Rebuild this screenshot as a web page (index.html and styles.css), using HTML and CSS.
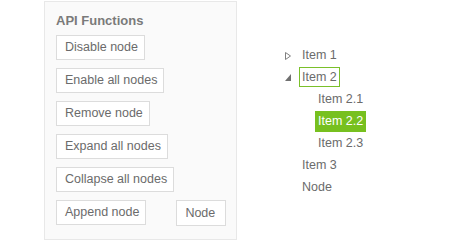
FILE: index.html
```html
<!DOCTYPE html>
<html>
<head>
<meta charset="utf-8">
<link rel="stylesheet" href="styles.css">
</head>
<body>
<div class="page">
  <div class="panel">
    <h4 class="title">API Functions</h4>
    <div class="btn-row"><button class="btn">Disable node</button></div>
    <div class="btn-row"><button class="btn">Enable all nodes</button></div>
    <div class="btn-row"><button class="btn">Remove node</button></div>
    <div class="btn-row"><button class="btn">Expand all nodes</button></div>
    <div class="btn-row"><button class="btn">Collapse all nodes</button></div>
    <div class="btn-row last"><button class="btn">Append node</button><span class="input">Node</span></div>
  </div>
  <ul class="tree">
    <li>
      <div class="row">
        <span class="icon"><svg width="15" height="22" viewBox="0 0 15 22"><polygon points="1.5,8.5 6.5,12 1.5,15.5" fill="none" stroke="#808080" stroke-width="1"/></svg></span>
        <span class="k-in">Item 1</span>
      </div>
    </li>
    <li>
      <div class="row">
        <span class="icon"><svg width="15" height="22" viewBox="0 0 15 22"><polygon points="7,8 7,15 1,15" fill="#707070"/></svg></span>
        <span class="k-in focused">Item 2</span>
      </div>
      <ul class="sub">
        <li><div class="row"><span class="icon"></span><span class="k-in">Item 2.1</span></div></li>
        <li><div class="row"><span class="icon"></span><span class="k-in selected">Item 2.2</span></div></li>
        <li><div class="row"><span class="icon"></span><span class="k-in">Item 2.3</span></div></li>
      </ul>
    </li>
    <li><div class="row"><span class="icon"></span><span class="k-in">Item 3</span></div></li>
    <li><div class="row"><span class="icon"></span><span class="k-in">Node</span></div></li>
  </ul>
</div>
</body>
</html>
```
FILE: styles.css
```css
html, body {
  margin: 0;
  padding: 0;
  background: #ffffff;
}
body {
  font-family: "Liberation Sans", Arial, sans-serif;
  font-size: 12.5px;
  color: #6b6b6b;
}
.page {
  display: flex;
  align-items: flex-start;
}
.panel {
  box-sizing: border-box;
  margin: 1px 0 0 44px;
  width: 193px;
  height: 239px;
  background: #fafafa;
  border: 1px solid #e8e8e8;
  padding: 11px 0 0 11px;
}
.title {
  margin: 0 0 6px 0;
  font-size: 13px;
  font-weight: bold;
  line-height: 16px;
  color: #7a7a7a;
}
.btn-row {
  display: flex;
  margin-bottom: 8px;
}
.btn-row.last {
  margin-bottom: 0;
}
.btn {
  box-sizing: border-box;
  height: 25px;
  margin: 0;
  padding: 0 6px 0 8px;
  background: #ffffff;
  border: 1px solid #dcdcdc;
  font-family: inherit;
  font-size: 12.5px;
  color: #6b6b6b;
  line-height: 23px;
}
.input {
  box-sizing: border-box;
  display: block;
  height: 26px;
  width: 50px;
  margin-left: 30px;
  background: #ffffff;
  border: 1px solid #dcdcdc;
  padding-left: 8px;
  line-height: 24px;
}
.tree {
  list-style: none;
  margin: 44px 0 0 47px;
  padding: 0;
}
.tree ul {
  list-style: none;
  margin: 0;
  padding: 0 0 0 16px;
}
.row {
  display: flex;
  align-items: center;
  height: 22px;
}
.icon {
  display: block;
  width: 15px;
  height: 22px;
  flex: none;
}
.icon svg {
  display: block;
}
.k-in {
  display: block;
  box-sizing: border-box;
  height: 20px;
  line-height: 18px;
  padding: 0 2px;
  border: 1px solid transparent;
  white-space: nowrap;
}
.k-in.focused {
  border-color: #7ac02a;
}
.k-in.selected {
  background: #77c01f;
  border-color: #77c01f;
  color: #ffffff;
  height: 21px;
  line-height: 19px;
  padding: 0 2px;
}
```
